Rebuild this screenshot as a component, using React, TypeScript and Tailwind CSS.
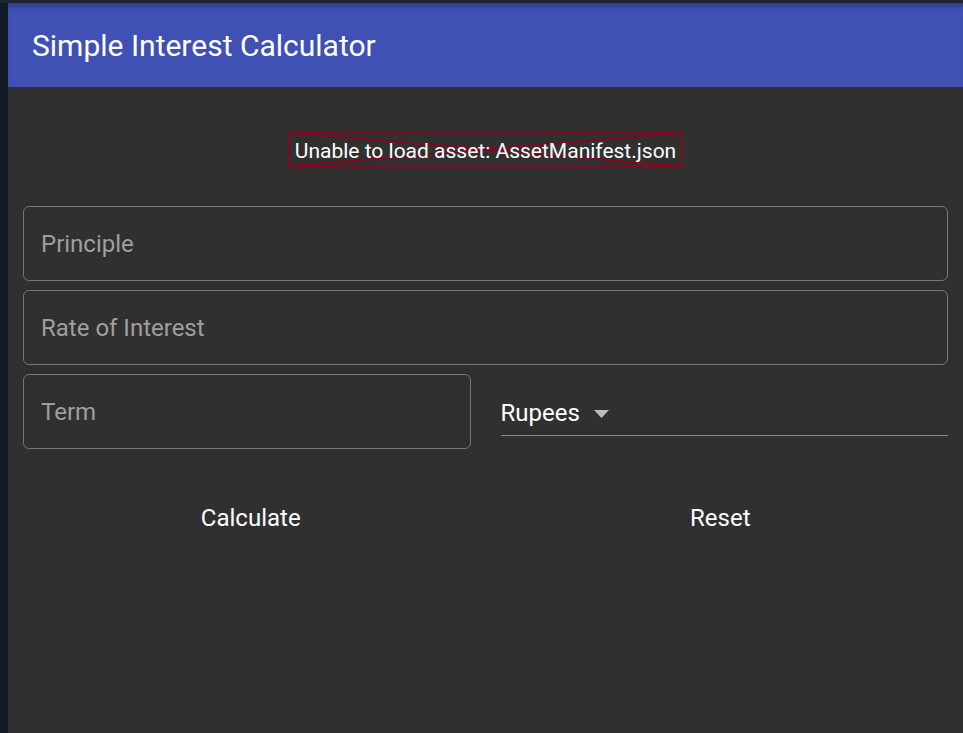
const fields = ["Principle", "Rate of Interest"];

function OutlinedField({ label }: { label: string }) {
  return (
    <div className="flex h-[75px] items-center rounded-[6px] border-[1.5px] border-[#777777] pl-[17px]">
      <span className="text-[24px] text-[#9f9f9f]">{label}</span>
    </div>
  );
}

export default function App() {
  return (
    <div className="flex min-h-[733px] flex-col bg-[#131a26] font-['Roboto',sans-serif]">
      {/* top window strip */}
      <div className="h-[3px] bg-[#1f2631]" />

      <div className="flex flex-1">
        <div className="w-[8px] bg-[#131a26]" />

        <div className="flex flex-1 flex-col bg-[#303030]">
          {/* ============ APP BAR ============ */}
          <header className="flex h-[84px] items-center bg-[#3f51b5] px-[24px] pt-[2px] shadow-[inset_0_7px_6px_-5px_rgba(0,0,0,0.35)]">
            <h1 className="text-[30px] leading-none text-white">
              Simple Interest Calculator
            </h1>
          </header>

          {/* ============ BODY ============ */}
          <main className="flex flex-col px-[15px]">
            <div className="flex justify-center pt-[44px]">
              <div className="relative flex h-[37px] items-center border-2 border-[#7e0a20] px-[5px] pt-[3px]">
                <svg
                  className="absolute inset-0 h-full w-full"
                  viewBox="0 0 100 100"
                  preserveAspectRatio="none"
                >
                  <line x1="0" y1="0" x2="100" y2="100" stroke="#7e0a20" strokeWidth="2" vectorEffect="non-scaling-stroke" />
                  <line x1="100" y1="0" x2="0" y2="100" stroke="#7e0a20" strokeWidth="2" vectorEffect="non-scaling-stroke" />
                </svg>
                <span className="relative text-[21px] leading-none text-white">
                  Unable to load asset: AssetManifest.json
                </span>
              </div>
            </div>

            <div className="mt-[38px] flex flex-col gap-[9px]">
              {fields.map((f) => (
                <OutlinedField key={f} label={f} />
              ))}

              <div className="grid grid-cols-2 gap-x-[30px]">
                <OutlinedField label="Term" />

                <div className="flex h-[62px] items-end border-b-[1.5px] border-[#8a8a8a] pb-[8px]">
                  <span className="text-[24px] leading-[28px] text-white">Rupees</span>
                  <svg className="mb-[9px] ml-[14px]" width="15" height="8" viewBox="0 0 15 8">
                    <path d="M0 0 L15 0 L7.5 8 Z" fill="#bdbdbd" />
                  </svg>
                </div>
              </div>
            </div>

            <div className="mt-[42px] flex gap-[14px]">
              <button className="flex h-[54px] flex-1 items-center justify-center text-[24px] text-white">
                Calculate
              </button>
              <button className="flex h-[54px] flex-1 items-center justify-center text-[24px] text-white">
                Reset
              </button>
            </div>
          </main>
        </div>
      </div>
    </div>
  );
}
